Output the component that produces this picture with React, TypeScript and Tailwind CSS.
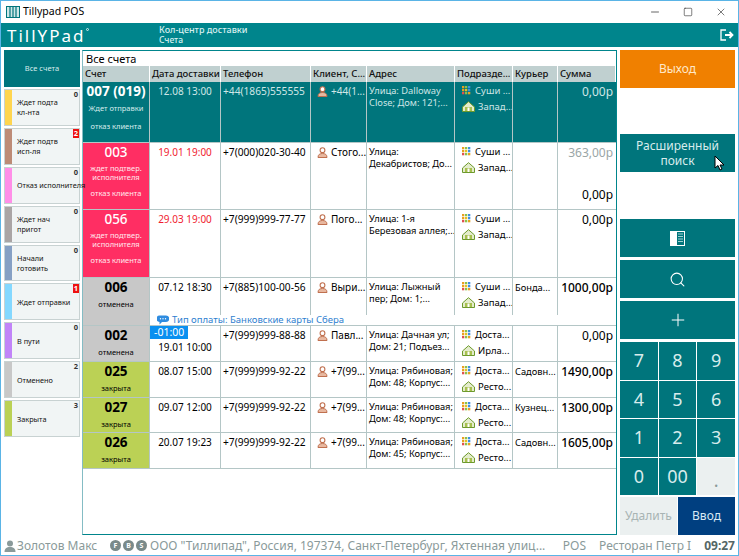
import { Minus, Search, Plus, Square, X } from 'lucide-react';
import clsx from 'clsx';

const SIDE = [
  { label: ['Ждет подта', 'кл-нта'], color: 'bg-[#ffd54f]', count: '0' },
  { label: ['Ждет подтв', 'исп-ля'], color: 'bg-[#bd8b76]', count: '2', red: true },
  { label: ['Отказ исполнителя'], color: 'bg-[#ff8fe8]', count: '0' },
  { label: ['Ждет нач', 'пригот'], color: 'bg-[#aaa5a5]', count: '0' },
  { label: ['Начали', 'готовить'], color: 'bg-[#86a0c4]', count: '0' },
  { label: ['Ждет отправки'], color: 'bg-[#84d8ff]', count: '1', red: true },
  { label: ['В пути'], color: 'bg-[#c184f8]', count: '0' },
  { label: ['Отменено'], color: 'bg-[#c8c8c8]', count: '2' },
  { label: ['Закрыта'], color: 'bg-[#bbd155]', count: '3' },
];

const COLS = ['w-[67px]', 'w-[71px]', 'w-[90px]', 'w-[56px]', 'w-[88px]', 'w-[58px]', 'w-[45px]', 'flex-1'];
const HEADERS = ['Счет', 'Дата доставки', 'Телефон', 'Клиент, С...', 'Адрес', 'Подразде...', 'Курьер', 'Сумма'];

const ROWS = [
  { h: 'h-[61px]', no: '007 (019)', sub: ['Ждет отправки', '', 'отказ клиента'], tone: 'sel', date: '12.08 13:00', phone: '+44(1865)555555', client: '+44(1...', addr: ['Улица: Dalloway', 'Close; Дом: 121;...'], dep: ['Суши ...', 'Запад...'], courier: '', sum: '0,00р' },
  { h: 'h-[67px]', no: '003', sub: ['ждет подтвер.', 'исполнителя', '', 'отказ клиента'], tone: 'pink', date: '19.01 19:00', phone: '+7(000)020-30-40', client: 'Стого...', addr: ['Улица:', 'Декабристов; До...'], dep: ['Суши ...', 'Запад...'], courier: '', sum: '0,00р', old: '363,00р' },
  { h: 'h-[68px]', no: '056', sub: ['ждет подтвер.', 'исполнителя', '', 'отказ клиента'], tone: 'pink', date: '29.03 19:00', phone: '+7(999)999-77-77', client: 'Пого...', addr: ['Улица: 1-я', 'Березовая аллея;...'], dep: ['Суши ...', 'Запад...'], courier: '', sum: '0,00р' },
  { h: 'h-[48px]', no: '006', sub: ['отменена'], tone: 'grey', date: '07.12 18:30', phone: '+7(885)100-00-56', client: 'Выри...', addr: ['Улица: Лыжный', 'пер; Дом: 1;...'], dep: ['Суши ...', 'Запад...'], courier: 'Бонда...', sum: '1000,00р', note: 'Тип оплаты: Банковские карты Сбера' },
  { h: 'h-[36px]', no: '002', sub: ['отменена'], tone: 'grey', date: '19.01 10:00', late: '-01:00', phone: '+7(999)999-88-88', client: 'Павл...', addr: ['Улица: Дачная ул;', 'Дом: 21; Подъез...'], dep: ['Доста...', 'Ирла...'], courier: '', sum: '0,00р' },
  { h: 'h-[36px]', no: '025', sub: ['закрыта'], tone: 'green', date: '08.07 15:00', phone: '+7(999)999-92-22', client: '+7(99...', addr: ['Улица: Рябиновая;', 'Дом: 48; Корпус:...'], dep: ['Доста...', 'Ресто...'], courier: 'Садовн...', sum: '1490,00р' },
  { h: 'h-[35px]', no: '027', sub: ['закрыта'], tone: 'green', date: '09.07 12:00', phone: '+7(999)999-92-22', client: '+7(99...', addr: ['Улица: Рябиновая;', 'Дом: 48; Корпус:...'], dep: ['Доста...', 'Ресто...'], courier: 'Кузнец...', sum: '1300,00р' },
  { h: 'h-[36px]', no: '026', sub: ['закрыта'], tone: 'green', date: '20.07 19:23', phone: '+7(999)999-92-22', client: '+7(99...', addr: ['Улица: Рябиновая;', 'Дом: 45; Корпус:...'], dep: ['Доста...', 'Ресто...'], courier: 'Садовн...', sum: '1605,00р' },
];

function PersonIcon() {
  return (
    <svg width="11" height="11" viewBox="0 0 11 11" className="shrink-0">
      <circle cx="5.5" cy="3.2" r="2.4" fill="#fff" stroke="#c0704f" strokeWidth="1.1" />
      <path d="M1 10.5c0-3 1.800-4 4.500-4s4.500 1 4.500 4z" fill="#e8b8a0" stroke="#c0704f" strokeWidth="1" />
    </svg>
  );
}

function GridIcon() {
  const c = ['#e8a020', '#8bc34a', '#3f8fe0', '#e8a020', '#e8c020', '#3f8fe0', '#e05050', '#8bc34a', '#e8a020'];
  return (
    <svg width="9" height="9" viewBox="0 0 9 9" className="shrink-0">
      {c.map((f, i) => (
        <rect key={i} x={(i % 3) * 3} y={Math.floor(i / 3) * 3} width="2.300" height="2.300" fill={f} />
      ))}
    </svg>
  );
}

function HomeIcon() {
  return (
    <svg width="13" height="11" viewBox="0 0 13 11" className="shrink-0">
      <path d="M0.500 10.500V6L6.500 0.700 12.500 6v4.500z" fill="#e4eccc" stroke="#6d9a2c" strokeWidth="1" />
      <rect x="3" y="6" width="7" height="4" fill="#a8c050" />
      <rect x="5.500" y="6.500" width="2" height="3.500" fill="#fff" />
    </svg>
  );
}

function StatusDot({ ch }: { ch: string }) {
  return (
    <span className="flex h-[11px] w-[11px] items-center justify-center rounded-full bg-[#7a8a8a] text-[7px] font-bold leading-none text-white">
      {ch}
    </span>
  );
}

function Row({ r }: { r: (typeof ROWS)[number] }) {
  const sel = r.tone === 'sel';
  const pink = r.tone === 'pink';
  const first = clsx(
    'flex shrink-0 flex-col items-center overflow-hidden whitespace-nowrap border-r border-[#b4c6c6]',
    COLS[0],
    sel && 'bg-[#00757c] text-[#d8ecec]',
    pink && 'bg-[#ff2e63] text-[#ffe8ee]',
    r.tone === 'grey' && 'bg-[#c8c8c8] text-black',
    r.tone === 'green' && 'bg-[#bbd155] text-black',
  );
  const cell = 'shrink-0 border-r border-[#b4c6c6] overflow-hidden whitespace-nowrap';
  return (
    <div className={clsx('flex shrink-0 border-b border-[#b4c6c6]', r.h, sel && 'bg-[#00757c] text-[#cfe6e6]')}>
      <div className={first}>
        <div className={clsx('text-[13.500px] leading-[19px]', sel ? 'font-bold text-white' : pink ? 'font-medium text-white' : 'font-bold')}>{r.no}</div>
        <div className={clsx('flex flex-col items-center text-[7.500px] leading-[9px]', pink ? 'mt-[2px]' : 'mt-[3px]')}>
          {r.sub.map((s, i) => (
            <div key={i} className={clsx(s === '' && (pink ? 'h-[7px]' : 'h-[9px]'))}>{s}</div>
          ))}
        </div>
      </div>
      <div className="flex min-h-0 min-w-0 flex-1 flex-col">
        <div className="flex min-h-0 flex-1">
          <div className={clsx(cell, COLS[1], 'flex flex-col items-center text-[10px] leading-[13px]', r.late ? '' : 'pt-[3px]', pink && 'text-[#f01c30]')}>
            {r.late && <div className="mb-[2px] self-start bg-[#0a90f0] px-[4px] text-[10.500px] text-white">{r.late}</div>}
            <div>{r.date}</div>
          </div>
          <div className={clsx(cell, COLS[2], 'pl-[2px] pt-[3px] text-[10.200px] leading-[13px]')}>{r.phone}</div>
          <div className={clsx(cell, COLS[3], 'flex items-start gap-[3px] pl-[6px] pt-[4px] text-[10px] leading-[11px]')}>
            <PersonIcon />
            <span>{r.client}</span>
          </div>
          <div className={clsx(cell, COLS[4], 'pl-[2px] pt-[3px] text-[9.300px] leading-[12px]')}>
            {r.addr.map(a => <div key={a}>{a}</div>)}
          </div>
          <div className={clsx(cell, COLS[5], 'flex flex-col gap-[3px] pl-[7px] pt-[2px] text-[9.500px] leading-[13px]')}>
            <div className="flex items-center gap-[4px]"><GridIcon /><span>{r.dep[0]}</span></div>
            <div className="flex items-center gap-[3px]"><HomeIcon /><span>{r.dep[1]}</span></div>
          </div>
          <div className={clsx(cell, COLS[6], 'pl-[2px] pt-[3px] text-[9.300px] leading-[13px]')}>{r.courier}</div>
          <div className={clsx('flex min-w-0 flex-1 flex-col justify-between pb-[7px] pr-[3px] pt-[3px] text-right text-[12px] leading-[14px]', r.sum.length > 6 && 'font-medium')}>
            {r.old ? <div className="text-[#9aa6a6]">{r.old}</div> : <div>{r.sum}</div>}
            {r.old && <div>{r.sum}</div>}
          </div>
        </div>
        {r.note && (
          <div className="flex h-[10px] shrink-0 items-center gap-[3px] bg-white pl-[7px] text-[9.500px] leading-[10px] text-[#2f7fd0]">
            <svg width="12" height="10" viewBox="0 0 12 10" className="shrink-0">
              <path d="M3 0.500h6a3 3 0 0 1 0 6.500h-4l-2.500 2.500v-2.600a3.200 3.200 0 0 1 0.500-6.400z" fill="#2f8ce0" />
              <circle cx="3.500" cy="3.800" r="0.700" fill="#fff" />
              <circle cx="6" cy="3.800" r="0.700" fill="#fff" />
              <circle cx="8.500" cy="3.800" r="0.700" fill="#fff" />
            </svg>
            <span>{r.note}</span>
          </div>
        )}
      </div>
    </div>
  );
}

const PAD = ['7', '8', '9', '4', '5', '6', '1', '2', '3'];

export default function App() {
  return (
    <div className="relative flex h-[556px] w-[739px] flex-col overflow-hidden border border-[#5ab4e6] bg-white text-black [font-family:'Noto_Sans',sans-serif]">
      {/* title bar */}
      <div className="flex h-[22px] shrink-0 items-center bg-white pl-[5px] text-[10.500px]">
        <svg width="14" height="12" viewBox="0 0 14 12" className="shrink-0">
          <rect x="0.500" y="0.500" width="13" height="11" fill="#cfe8e8" stroke="#00757c" />
          <path d="M4 1v10M7 1v10M10 1v10" stroke="#00757c" strokeWidth="1.200" />
        </svg>
        <span className="ml-[3px]">Tillypad POS</span>
        <div className="ml-auto flex items-center pr-[1px] text-[#333]">
          <div className="flex w-[33px] justify-center"><Minus size={12} strokeWidth={1.5} /></div>
          <div className="flex w-[33px] justify-center"><Square size={10} strokeWidth={1.5} /></div>
          <div className="flex w-[33px] justify-center"><X size={12} strokeWidth={1.3} /></div>
        </div>
      </div>

      {/* header */}
      <div className="flex h-[24px] shrink-0 items-center bg-[#00858c] pl-[6px] pr-[4px] text-white">
        <div className="flex w-[152px] items-start">
          <span className="text-[17px] leading-none tracking-[2px]">TillYPad</span>
          <span className="mt-[1px] h-[3px] w-[3px] rounded-full border border-[#d8f0f0]" />
        </div>
        <div className="text-[8.500px] font-medium leading-[10px] text-[#d8f0f0]">
          <div className="text-[9px]">Кол-центр доставки</div>
          <div>Счета</div>
        </div>
        <svg width="14" height="12" viewBox="0 0 14 12" fill="none" stroke="#fff" strokeWidth="1.300" className="ml-auto">
          <path d="M6 1H1v10h5" />
          <path d="M5 6h7M9.500 3l3 3-3 3" strokeWidth="1.800" />
        </svg>
      </div>

      <div className="flex min-h-0 flex-1 pt-[3px]">
        {/* sidebar */}
        <div className="ml-[3px] mr-[2px] flex h-[387px] w-[76px] shrink-0 flex-col gap-[2px]">
          <div className="flex h-[37px] items-center justify-center bg-[#00757c] text-[7.500px] text-[#d8ecec]">Все счета</div>
          {SIDE.map(s => (
            <div key={s.color} className="relative flex min-h-0 flex-1 items-center border border-[#c8d2d2] bg-[#f1f5f5]">
              <div className={clsx('h-full w-[7px] shrink-0', s.color)} />
              <div className="whitespace-nowrap pl-[5px] text-[7.300px] leading-[10px] text-[#111]">
                {s.label.map(l => <div key={l}>{l}</div>)}
              </div>
              <div className={clsx('absolute right-0 top-0 px-[1px] text-[7.500px] font-bold leading-[9px]', s.red ? 'bg-[#ee1111] text-white' : 'text-[#333]')}>{s.count}</div>
            </div>
          ))}
        </div>

        {/* orders table */}
        <div className="mb-[1px] flex w-[535px] shrink-0 flex-col border border-[#00858c] border-l-[#84bcc4]">
          <div className="flex h-[15px] shrink-0 items-center pl-[3px] text-[11px] leading-none">Все счета</div>
          <div className="flex h-[16px] shrink-0 bg-[#c0d0d0] text-[9.500px] font-medium leading-[15px] text-[#111]">
            {HEADERS.map((h, i) => (
              <div key={h} className={clsx('overflow-hidden whitespace-nowrap border-r border-white pl-[2px]', COLS[i], i < 7 && 'shrink-0')}>{h}</div>
            ))}
          </div>
          {ROWS.map(r => <Row key={r.no} r={r} />)}
        </div>

        {/* right panel */}
        <div className="mb-[1px] ml-[3px] flex w-[115px] shrink-0 flex-col text-[#d8ecec]">
          <div className="flex h-[38px] items-center justify-center bg-[#f08000] text-[12px] text-[#ffe8c8]">Выход</div>
          <div className="mt-[46px] flex h-[38px] items-center justify-center bg-[#00757c] text-center text-[12px] leading-[15px]">
            Расширенный<br />поиск
          </div>
          <div className="mt-[47px] flex h-[38px] items-center justify-center bg-[#00757c]">
            <svg width="15" height="15" viewBox="0 0 15 15">
              <rect x="0" y="0" width="15" height="15" fill="#fff" />
              <rect x="7" y="1" width="7" height="13" fill="#00757c" />
              <path d="M8 3h5M8 5.500h5M8 8h5M8 10.500h5" stroke="#9fd0d0" />
            </svg>
          </div>
          <div className="mt-[3px] flex h-[38px] items-center justify-center bg-[#00757c] text-white"><Search size={17} strokeWidth={1.5} /></div>
          <div className="mt-[3px] flex h-[38px] items-center justify-center bg-[#00757c] text-white"><Plus size={20} strokeWidth={1.2} /></div>
          <div className="mt-[3px] grid h-[153px] grid-cols-3 grid-rows-4 gap-px bg-white text-[18px] text-[#d8ecec]">
            {PAD.map(k => <div key={k} className="flex items-center justify-center bg-[#00757c]">{k}</div>)}
            <div className="flex items-center justify-center bg-[#00757c]">0</div>
            <div className="flex items-center justify-center bg-[#00757c]">00</div>
            <div className="flex items-center justify-center bg-[#ebf0f0] pt-[8px] text-[#8a9a9a]">.</div>
          </div>
          <div className="mt-[2px] flex h-[38px] gap-px text-[12px]">
            <div className="flex flex-1 items-center justify-center bg-[#ebf0f0] text-[#a8b4b4]">Удалить</div>
            <div className="flex flex-1 items-center justify-center bg-[#003f80] text-[#d8e8f4]">Ввод</div>
          </div>
        </div>
      </div>

      {/* status bar */}
      <div className="flex h-[19px] shrink-0 items-center pl-[3px] pr-[3px] text-[12px] leading-none text-[#8a9a9a]">
        <svg width="12" height="12" viewBox="0 0 12 12" className="shrink-0">
          <circle cx="6" cy="3.500" r="3" fill="#8a9a9a" />
          <path d="M0.500 12c0-3.500 2-5 5.500-5s5.500 1.500 5.500 5z" fill="#8a9a9a" />
        </svg>
        <span className="ml-[1px] w-[93px] whitespace-nowrap">Золотов Макс</span>
        <div className="mr-[3px] flex gap-[2px]"><StatusDot ch="F" /><StatusDot ch="B" /><StatusDot ch="S" /></div>
        <span className="whitespace-nowrap">ООО "Тиллипад", Россия, 197374, Санкт-Петербург, Яхтенная улиц...</span>
        <span className="ml-auto">POS</span>
        <span className="ml-[13px] whitespace-nowrap">Ресторан Петр I</span>
        <span className="ml-[13px] font-bold text-[#556666]">09:27</span>
      </div>

      {/* mouse pointer */}
      <svg width="11" height="16" viewBox="0 0 11 16" className="absolute left-[713px] top-[154px]">
        <path d="M1 1v12l3-2.500 2 4.500 2-1-2-4h4z" fill="#fff" stroke="#000" strokeWidth="1" />
      </svg>
    </div>
  );
}
